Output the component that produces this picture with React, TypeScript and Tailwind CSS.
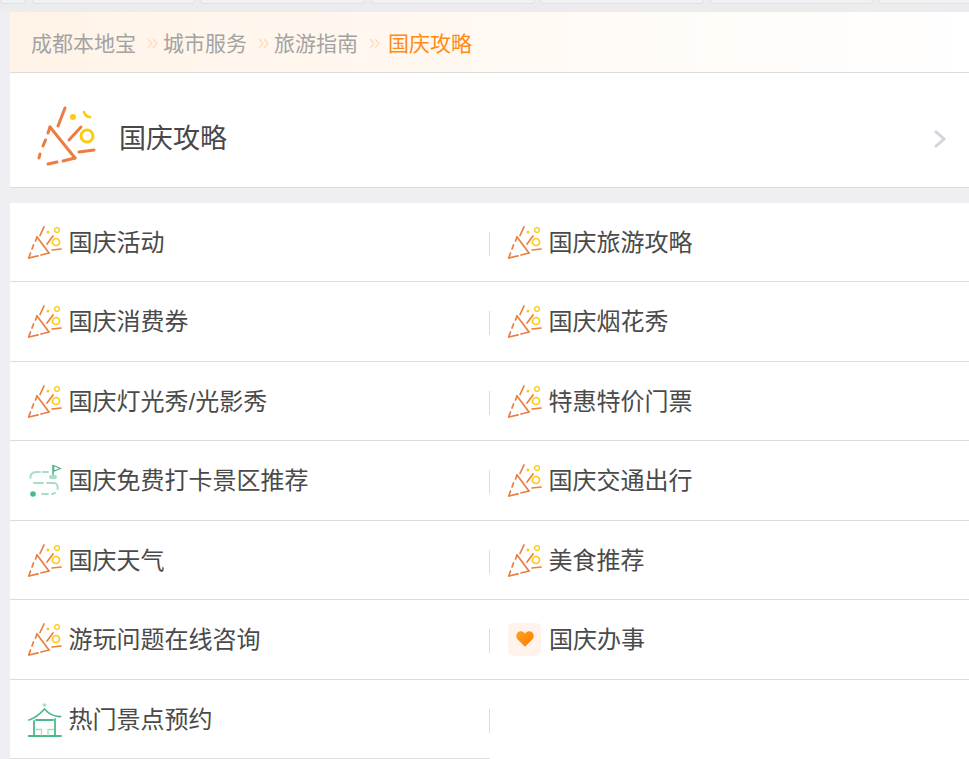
import type { ReactNode } from "react";

const font = { fontFamily: '"Liberation Sans", "Noto Sans CJK SC", sans-serif' };

function Party() {
  return (
    <svg viewBox="36 104 64 64" fill="none" strokeLinecap="round" className="h-[64px] w-[64px] shrink-0">
      <g stroke="#ea7d3f" strokeWidth="3">
        <path d="M50 127 L75 158" />
        <path d="M50 127 L48 133 M45.500 140 L43 146 M40 154 L39 158" />
        <path d="M48 164 L57 162 M63 161 L75 158" />
        <path d="M65 108 L58 126" />
        <path d="M81 127 L69 140" />
        <path d="M79 152 L94 150" />
      </g>
      <circle cx="87" cy="136" r="6" stroke="#fdc913" strokeWidth="3" />
      <circle cx="73" cy="117" r="3" fill="#fdc913" />
      <path d="M84 112 C85 115 87 117 90 117" stroke="#fdc913" strokeWidth="2.500" />
    </svg>
  );
}

function SmallParty() {
  return (
    <svg viewBox="0 0 34 34" fill="none" strokeLinecap="round" className="h-[34px] w-[34px] shrink-0">
      <g stroke="#ea7d3f" strokeWidth="1.700">
        <path d="M9 11 L21 27" />
        <path d="M9 11 L7.500 15 M5.500 19 L4 23 M2.500 27 L0.800 32" />
        <path d="M0.800 32 L10 29.800 M13 29 L21 27" />
        <path d="M16 1 L12 9.500" />
        <path d="M25 10 L19 18" />
        <path d="M24 24 L33 23" />
      </g>
      <circle cx="28" cy="16" r="3.500" stroke="#fdc913" strokeWidth="1.700" />
      <circle cx="29" cy="4" r="2.400" stroke="#fdc913" strokeWidth="1.300" />
      <circle cx="20" cy="6" r="1.500" fill="#fdc913" />
    </svg>
  );
}

function RouteIcon() {
  return (
    <svg viewBox="28 464 34 34" fill="none" className="h-[34px] w-[34px] shrink-0">
      <path d="M53 465 V477" stroke="#4fb888" strokeWidth="1.600" />
      <path d="M53.500 465.500 L60.500 468.500 L54 471 Z" stroke="#4fb888" strokeWidth="1.300" fill="#fff" />
      <ellipse cx="53" cy="477" rx="4" ry="2.200" fill="#a8dfc4" />
      <path d="M40 472 H36 C32 472 30 475 30.500 478" stroke="#a8dfc4" strokeWidth="2" strokeLinecap="round" />
      <path d="M43 472 H48" stroke="#a8dfc4" strokeWidth="2" strokeLinecap="round" />
      <path d="M34 483 H43 M47 483 H54 C57 483 58 486 57.500 489" stroke="#a8dfc4" strokeWidth="2" strokeLinecap="round" />
      <path d="M55 493 L52 494 M48 494 H42" stroke="#a8dfc4" strokeWidth="2" strokeLinecap="round" />
      <circle cx="33" cy="494" r="2.800" fill="#4fb888" />
    </svg>
  );
}

function Pavilion() {
  return (
    <svg viewBox="28 702 34 34" fill="none" strokeLinecap="round" className="h-[34px] w-[34px] shrink-0">
      <circle cx="44.500" cy="704" r="1.800" fill="#a8dfc4" />
      <g stroke="#4fb888" strokeWidth="1.800">
        <path d="M29 719 C35 717 40 713 44.500 708 C49 713 54 716 60.500 715.500" />
        <path d="M36 719 H53" />
        <path d="M34 720 V734 M55 718 V734" />
        <path d="M28 735 H61" />
      </g>
      <path d="M36 728.500 H41.500 V734 M48 734 V728.500 H53.500" stroke="#a8dfc4" strokeWidth="1.300" />
    </svg>
  );
}

function Heart() {
  return (
    <span className="-mt-[2px] mr-[1.5px] flex h-[33px] w-[33px] shrink-0 items-center justify-center rounded-[5px] bg-[#fff3ec]">
      <svg viewBox="0 0 20 18" className="h-[16px] w-[18px]">
        <defs>
          <linearGradient id="heart" x1="0" y1="0" x2="1" y2="1">
            <stop offset="0" stopColor="#ffa21f" />
            <stop offset="1" stopColor="#ff7a00" />
          </linearGradient>
        </defs>
        <path
          d="M10 17.800 L1.800 9.500 C-1 6.500 0 0.300 5.500 0.300 C7.500 0.300 9 1.300 10 3 C11 1.300 12.500 0.300 14.500 0.300 C20 0.300 21 6.500 18.200 9.500 Z"
          fill="url(#heart)"
        />
      </svg>
    </span>
  );
}

function Sep({ className }: { className: string }) {
  return (
    <svg viewBox="0 0 11 11" fill="none" className={`-mt-[2px] h-[11px] w-[11px] shrink-0 ${className}`}>
      <path d="M1 1 L5 5.500 L1 10 M6 1 L10 5.500 L6 10" stroke="#ffdcbd" strokeWidth="1.400" />
    </svg>
  );
}

const rows: [ReactNode, string, ReactNode, string | null][] = [
  [<SmallParty />, "国庆活动", <SmallParty />, "国庆旅游攻略"],
  [<SmallParty />, "国庆消费券", <SmallParty />, "国庆烟花秀"],
  [<SmallParty />, "国庆灯光秀/光影秀", <SmallParty />, "特惠特价门票"],
  [<RouteIcon />, "国庆免费打卡景区推荐", <SmallParty />, "国庆交通出行"],
  [<SmallParty />, "国庆天气", <SmallParty />, "美食推荐"],
  [<SmallParty />, "游玩问题在线咨询", <Heart />, "国庆办事"],
  [<Pavilion />, "热门景点预约", null, null],
];

function Cell({ icon, label }: { icon: ReactNode; label: string }) {
  return (
    <div className="flex h-full items-center gap-[6.5px] pl-[18px] pt-[2px] text-[24px] leading-none text-[#4a4a4a]">
      {icon}
      <span>{label}</span>
    </div>
  );
}

export default function App() {
  return (
    <div className="h-[759px] w-[969px] overflow-hidden bg-[#eeeef3]" style={font}>
      <div className="flex h-[12px] gap-[5.5px] overflow-hidden bg-[#ececee]">
        {[26, 163, 165, 164, 164, 163, 163].map((w, i) => (
          <div
            key={i}
            className="h-[4px] shrink-0 rounded-b-[6px] border border-t-0 border-[#e1e1e6] bg-[#f1f1f3]"
            style={{ width: w }}
          />
        ))}
      </div>
      <div className="ml-[10px]">
        <div className="flex h-[61px] items-center border-b border-[#dcdcdc] bg-gradient-to-r from-[#fff3e7] to-white pl-[21px] pt-[4px] text-[21px] text-[#a3a3a3]">
          <span>成都本地宝</span>
          <Sep className="ml-[11px] mr-[5px]" />
          <span>城市服务</span>
          <Sep className="ml-[11px] mr-[5px]" />
          <span>旅游指南</span>
          <Sep className="ml-[11px] mr-[8px]" />
          <span className="text-[#ff8a14]">国庆攻略</span>
        </div>
        <div className="flex h-[115px] items-center border-b border-[#dcdcdc] bg-white pl-[26px] pr-[23px] pt-[12px]">
          <Party />
          <span className="ml-[19px] mt-[6px] flex-1 text-[27px] leading-none text-[#484848]">国庆攻略</span>
          <svg viewBox="0 0 14 20" fill="none" className="mt-[6px] h-[20px] w-[14px]">
            <path d="M3 2 L12 10 L3 18" stroke="#d4d4dc" strokeWidth="3" />
          </svg>
        </div>
        <div className="mt-[14.5px] bg-white">
          {rows.map(([li, l, ri, r]) => (
            <div key={l} className="relative grid h-[79.5px] grid-cols-[480px_1fr]">
              <div className="border-b border-[#dcdcdc]">
                <Cell icon={li} label={l} />
              </div>
              <div className={r ? "border-b border-[#dcdcdc]" : ""}>
                {r && <Cell icon={ri} label={r} />}
              </div>
              <span className="absolute left-[479px] top-[29px] h-[24px] w-px bg-[#dcdcdc]" />
            </div>
          ))}
        </div>
      </div>
    </div>
  );
}
